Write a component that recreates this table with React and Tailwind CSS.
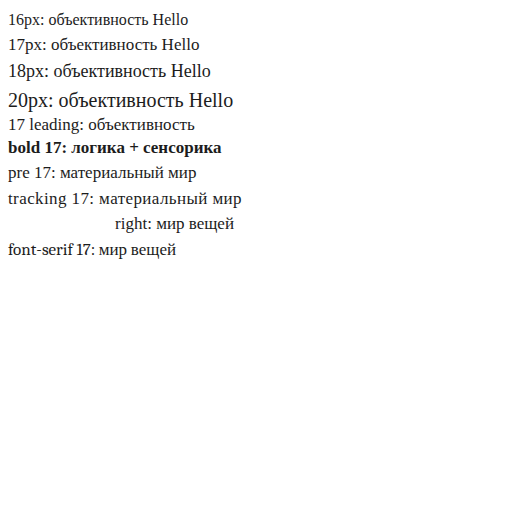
import React from 'react';

export default function App() {
  return (
    <div className="w-[520px] h-[510px] bg-white text-[#1c1c1c] p-2">
      <div className="font-['Liberation_Serif',serif] text-[16px]">16px: объективность Hello</div>
      <div className="font-['Liberation_Serif',serif] text-[17px]">17px: объективность Hello</div>
      <div className="font-['Liberation_Serif',serif] text-[18px]">18px: объективность Hello</div>
      <div className="font-['Liberation_Serif',serif] text-[20px]">20px: объективность Hello</div>
      <div className="font-['Liberation_Serif',serif] text-[17px] leading-[20px]">17 leading: объективность</div>
      <div className="font-['Liberation_Serif',serif] font-bold text-[17px]">bold 17: логика + сенсорика</div>
      <div className="font-['Liberation_Serif',serif] text-[17px] whitespace-pre">pre 17: материальный мир</div>
      <div className="font-['Liberation_Serif',serif] text-[17px] tracking-[0.4px]">tracking 17: материальный мир</div>
      <div className="font-['Liberation_Serif',serif] text-[17px] text-right w-[226px]">right: мир вещей</div>
      <div className="font-serif text-[17px]">font-serif 17: мир вещей</div>
    </div>
  );
}
